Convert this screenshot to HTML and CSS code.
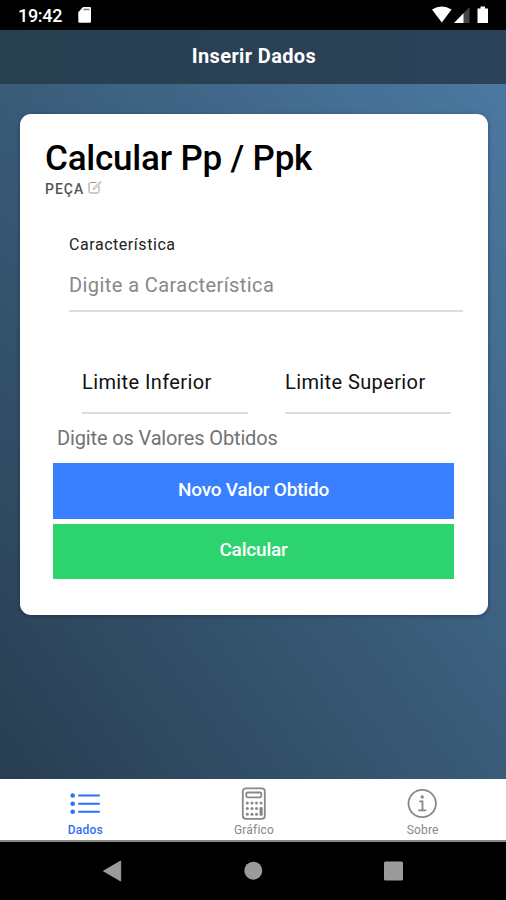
FILE: index.html
```html
<!DOCTYPE html>
<html lang="pt-BR">
<head>
<meta charset="utf-8">
<title>Inserir Dados</title>
<link rel="stylesheet" href="styles.css">
</head>
<body>
<div class="statusbar">
  <span class="clock">19:42</span>
  <svg class="sd" width="14" height="16" viewBox="0 0 14 16"><path d="M5 0h7.200Q13 0 13 1.500v12.700q0 1.500-1.300 1.500H1.600Q.3 15.700.3 14.200V5.200z" fill="#fff"/><path d="M5.500 2.500h6" stroke="#777" stroke-width="1.500"/></svg>
  <svg class="signals" width="58" height="18" viewBox="0 0 58 18"><path d="M0 3.500Q9.800-2.500 19.600 3.500L9.800 16.500z" fill="#fff"/><path d="M37.500 1v16H22z" fill="#444"/><path d="M31.500 7.200V17H22z" fill="#fff"/><path d="M45.500 2.500h3V.5h4.500v2h3V17H45.500z" fill="#fff"/></svg>
</div>
<header class="toolbar"><h1>Inserir Dados</h1></header>
<main class="content">
  <section class="card">
    <h2>Calcular Pp / Ppk</h2>
    <div class="piece"><span>PEÇA</span><svg width="14" height="13" viewBox="0 0 14 13" fill="none" stroke="#999"><path d="M8.500 1.500H2.500Q1 1.500 1 3v7.500Q1 12 2.500 12h7Q11 12 11 10.500V5"/><path d="M5 8.500l1-2L12.500.5l.8.8L7 7.700z" stroke-width=".8"/></svg></div>
    <label class="field">
      <span class="caption">Característica</span>
      <span class="placeholder">Digite a Característica</span>
    </label>
    <div class="limits">
      <div class="limit"><span class="lower">Limite Inferior</span></div>
      <div class="limit"><span class="upper">Limite Superior</span></div>
    </div>
    <p class="hint">Digite os Valores Obtidos</p>
    <div class="actions">
      <button class="primary">Novo Valor Obtido</button>
      <button class="success">Calcular</button>
    </div>
  </section>
</main>
<nav class="tabs">
  <a class="tab active"><svg width="34" height="34" viewBox="0 0 34 34" stroke="currentColor" stroke-linecap="round" stroke-width="2"><path d="M12 8.500h20M12 16.800h20M12 24.800h20"/><g fill="currentColor" stroke="none"><circle cx="5.700" cy="8.500" r="2.300"/><circle cx="5.700" cy="16.800" r="2.300"/><circle cx="5.700" cy="24.800" r="2.300"/></g></svg><span>Dados</span></a>
  <a class="tab"><svg width="34" height="34" viewBox="0 0 34 34" fill="none" stroke="currentColor"><rect x="6.800" y="1.300" width="22" height="30.500" rx="3" stroke-width="1.800"/><rect x="10.300" y="5.500" width="15" height="4.800" rx="1.200" stroke-width="1.800"/><g fill="currentColor" stroke="none"><circle cx="11.300" cy="16" r="1.500"/><circle cx="16" cy="16" r="1.500"/><circle cx="20.500" cy="16" r="1.500"/><circle cx="25" cy="16" r="1.500"/><circle cx="11.300" cy="21.500" r="1.500"/><circle cx="16" cy="21.500" r="1.500"/><circle cx="20.500" cy="21.500" r="1.500"/><circle cx="11.300" cy="27.200" r="1.500"/><circle cx="16" cy="27.200" r="1.500"/><circle cx="20.500" cy="27.200" r="1.500"/><rect x="23.500" y="20" width="3.200" height="8.700" rx="1.300"/></g></svg><span>Gráfico</span></a>
  <a class="tab"><svg width="34" height="34" viewBox="0 0 34 34" fill="none" stroke="currentColor"><circle cx="17.200" cy="16.500" r="13.700" stroke-width="1.800"/><path d="M14.300 14.400h3.200v8.800M13.300 23.400h8" stroke-width="1.800"/><circle cx="17.200" cy="10" r="1.700" fill="currentColor" stroke="none"/></svg><span>Sobre</span></a>
</nav>
<div class="sysnav">
  <svg width="20" height="22" viewBox="0 0 20 22"><path d="M18.700 1v20L1.500 11z" fill="#9b9b9b" stroke="#9b9b9b" stroke-linejoin="round"/></svg>
  <svg width="20" height="22" viewBox="0 0 20 22"><circle cx="10.300" cy="10.700" r="9" fill="#9b9b9b"/></svg>
  <svg width="20" height="22" viewBox="0 0 20 22"><rect x="1" y="1.500" width="19" height="19" rx="1.500" fill="#9b9b9b"/></svg>
</div>
</body>
</html>
```
FILE: styles.css
```css
* { box-sizing: border-box; }
body {
  margin: 0;
  height: 900px;
  display: flex;
  flex-direction: column;
  overflow: hidden;
  background: #000;
  font-family: Roboto, "Liberation Sans", sans-serif;
}
.statusbar {
  height: 30px;
  display: flex;
  align-items: center;
  padding: 0 16px 0 18px;
  color: #fff;
}
.clock { font-size: 18px; font-weight: 500; line-height: 30px; padding-top: 2px; letter-spacing: -.3px; }
.sd { margin-left: 16px; }
.signals { margin-left: auto; }
.toolbar {
  height: 54px;
  background: linear-gradient(90deg, #283f50, #2c4259);
  display: flex;
  align-items: center;
  justify-content: center;
}
h1 { margin: -2px 0 0 2px; color: #fff; font-size: 20px; font-weight: 700; letter-spacing: .37px; }
.content {
  height: 695px;
  padding: 30px 18px 0 20px;
  background: linear-gradient(to top right, #283e51, #4b79a1);
}
.card {
  height: 501px;
  padding: 26px 25px 0;
  background: #fff;
  border-radius: 11px;
  box-shadow: 0 1px 4px rgba(0, 20, 50, .4);
}
h2 { margin: 0; font-size: 35px; line-height: 38px; font-weight: 500; color: #000; white-space: nowrap; letter-spacing: -.2px; }
.piece { height: 22px; display: flex; align-items: center; gap: 4px; color: #555; font-size: 14px; font-weight: 500; letter-spacing: 1px; }
.piece svg { margin-bottom: 4px; }
.field { display: block; width: 394px; margin: 33px 0 0 24px; border-bottom: 2px solid #dedede; height: 79px; }
.caption, .placeholder { display: block; white-space: nowrap; }
.caption { font-size: 16px; line-height: 24px; color: #222; letter-spacing: .55px; }
.placeholder { margin-top: 15px; font-size: 20px; line-height: 26px; color: #888; letter-spacing: .42px; }
.limits { display: flex; gap: 37px; margin: 56px 0 0 37px; }
.limit { width: 166px; height: 46px; border-bottom: 2px solid #dedede; font-size: 20px; line-height: 28px; color: #111; white-space: nowrap; letter-spacing: .39px; }
.hint { margin: 10px 0 0 12px; font-size: 20px; line-height: 28px; color: #737373; letter-spacing: -.14px; }
.actions { width: 401px; margin: 11px 0 0 8px; display: grid; gap: 5px; }
.actions button { height: 56px; border: 0; padding: 0 0 3px; color: #fff; font: 500 19px/24px Roboto, sans-serif; letter-spacing: -.2px; }
.actions .success { height: 55px; }
.primary { background: #3880ff; }
.success { background: #2dd36f; }
.tabs { height: 63px; display: flex; background: #fff; border-bottom: 2px solid #888; }
.tab { flex: 1; display: flex; flex-direction: column; align-items: center; padding-top: 8px; color: #888; font-size: 12px; }
.tab span { line-height: 16px; margin: 1px 0 0 2px; letter-spacing: .2px; }
.active { color: #2c70f5; }
.active span { font-weight: 500; }
.sysnav { flex: 1; display: flex; justify-content: space-between; padding: 18px 103px 0 102px; }
```
